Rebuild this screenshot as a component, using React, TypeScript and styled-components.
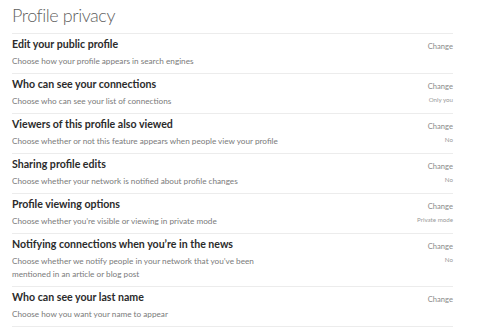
import React from 'react'
import styled, { createGlobalStyle } from 'styled-components'

const GlobalStyle = createGlobalStyle`
  body {
    margin: 0;
    background: #fff;
    font-family: Lato, "Liberation Sans", sans-serif;
  }
`

const Page = styled.div`
  width: 441px;
  padding-left: 12px;
`

const Heading = styled.h1`
  margin: 0;
  height: 33px;
  font-size: 18px;
  font-weight: 300;
  line-height: 33px;
  color: #5f5f5f;
  letter-spacing: -0.45px;
  position: relative;
  top: -1px;
`

const List = styled.div`
  border-top: 1px solid #ececec;
`

const Row = styled.div`
  display: flex;
  justify-content: space-between;
  border-bottom: 1px solid #ececec;
  padding: 3px 0 5px;
`

const Texts = styled.div`
  flex: 1;
  min-width: 0;
`

const Title = styled.div`
  font-size: 10.6px;
  font-weight: 700;
  line-height: 15px;
  color: #2b2b2b;
`

const Desc = styled.div<{ $wrap?: number }>`
  margin-top: 3px;
  font-size: 8.2px;
  line-height: 13px;
  color: #7a7a7a;
  max-width: ${(p) => p.$wrap ?? 300}px;
`

const Side = styled.div`
  display: flex;
  flex-direction: column;
  align-items: flex-end;
  padding-top: 3px;
`

const Change = styled.span`
  font-size: 7.6px;
  line-height: 13px;
  color: #8a8a8a;
`

const Value = styled.span`
  margin-top: 1px;
  font-size: 6.2px;
  line-height: 12px;
  color: #9a9a9a;
`

const rows: { title: string; desc: string; value?: string; wrap?: number }[] = [
  { title: 'Edit your public profile', desc: 'Choose how your profile appears in search engines' },
  { title: 'Who can see your connections', desc: 'Choose who can see your list of connections', value: 'Only you' },
  {
    title: 'Viewers of this profile also viewed',
    desc: 'Choose whether or not this feature appears when people view your profile',
    value: 'No',
  },
  {
    title: 'Sharing profile edits',
    desc: 'Choose whether your network is notified about profile changes',
    value: 'No',
  },
  {
    title: 'Profile viewing options',
    desc: 'Choose whether you’re visible or viewing in private mode',
    value: 'Private mode',
  },
  {
    title: 'Notifying connections when you’re in the news',
    desc: 'Choose whether we notify people in your network that you’ve been mentioned in an article or blog post',
    value: 'No',
    wrap: 276,
  },
  { title: 'Who can see your last name', desc: 'Choose how you want your name to appear' },
]

export default function App() {
  return (
    <Page>
      <GlobalStyle />
      <Heading>Profile privacy</Heading>
      <List>
        {rows.map((r) => (
          <Row key={r.title}>
            <Texts>
              <Title>{r.title}</Title>
              <Desc $wrap={r.wrap}>{r.desc}</Desc>
            </Texts>
            <Side>
              <Change>Change</Change>
              {r.value && <Value>{r.value}</Value>}
            </Side>
          </Row>
        ))}
      </List>
    </Page>
  )
}
